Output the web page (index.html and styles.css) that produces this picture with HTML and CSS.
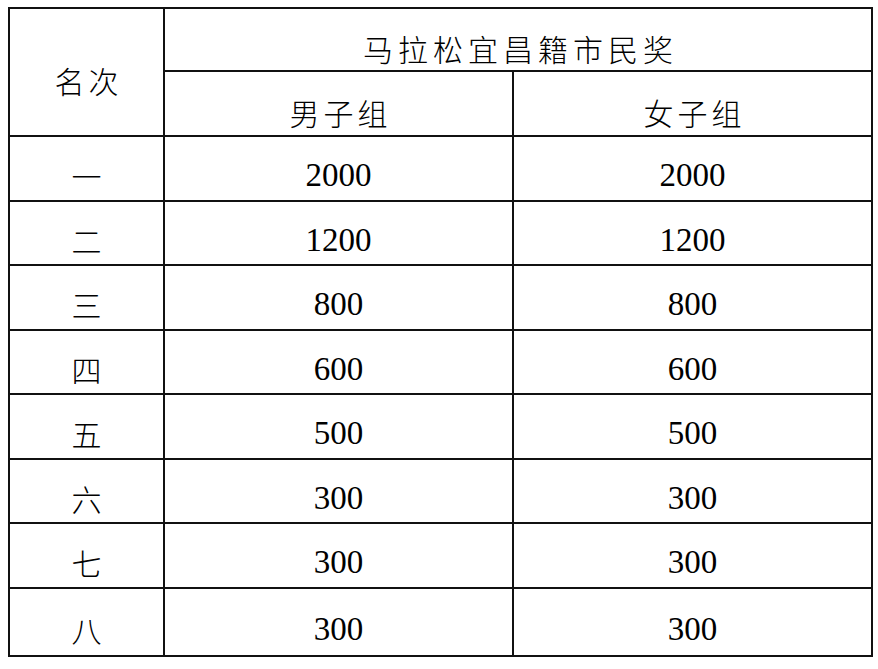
FILE: index.html
```html
<!DOCTYPE html>
<html lang="zh-CN">
<head>
<meta charset="utf-8">
<title>马拉松宜昌籍市民奖</title>
<link rel="stylesheet" href="styles.css">
</head>
<body>
<table class="prize">
  <colgroup>
    <col class="c-rank">
    <col class="c-men">
    <col class="c-women">
  </colgroup>
  <thead>
    <tr class="r-h1">
      <th rowspan="2" class="rank-head">名次</th>
      <th colspan="2" class="title">马拉松宜昌籍市民奖</th>
    </tr>
    <tr class="r-h2">
      <th class="group">男子组</th>
      <th class="group">女子组</th>
    </tr>
  </thead>
  <tbody>
    <tr class="r"><td class="rank">一</td><td>2000</td><td>2000</td></tr>
    <tr class="r"><td class="rank">二</td><td>1200</td><td>1200</td></tr>
    <tr class="r"><td class="rank">三</td><td>800</td><td>800</td></tr>
    <tr class="r"><td class="rank">四</td><td>600</td><td>600</td></tr>
    <tr class="r"><td class="rank">五</td><td>500</td><td>500</td></tr>
    <tr class="r"><td class="rank">六</td><td>300</td><td>300</td></tr>
    <tr class="r"><td class="rank">七</td><td>300</td><td>300</td></tr>
    <tr class="r r-tall"><td class="rank">八</td><td>300</td><td>300</td></tr>
  </tbody>
</table>
</body>
</html>
```

FILE: styles.css
```css
html, body {
  margin: 0;
  padding: 0;
  background: #ffffff;
}

body {
  padding: 7px 0 0 8px;
}

.prize {
  border-collapse: collapse;
  table-layout: fixed;
  width: 863px;
  font-family: "Liberation Serif", "Noto Sans CJK SC", serif;
  font-weight: 300;
  color: #000;
}

.c-rank { width: 155px; }
.c-men { width: 349px; }
.c-women { width: 359px; }

.prize th,
.prize td {
  border: 2px solid #111;
  padding: 16px 0 0 0;
  text-align: center;
  vertical-align: middle;
  font-weight: 300;
  line-height: 1.2;
}

.prize td {
  font-size: 33px;
}

.rank-head,
.title,
.group,
.prize td.rank {
  font-family: "Noto Sans CJK SC", sans-serif;
  font-size: 30px;
}

.prize td.rank { padding-top: 14px; }
.rank-head { letter-spacing: 4px; text-indent: 4px; padding-top: 14px; }
.title { letter-spacing: 5px; text-indent: 5px; padding-top: 8px; }
.group { letter-spacing: 4px; text-indent: 4px; padding-top: 12px; }

.r-h1 { height: 63px; }
.r-h2 { height: 65px; }
.r { height: 64.5px; }
.r-tall { height: 68px; }
```
